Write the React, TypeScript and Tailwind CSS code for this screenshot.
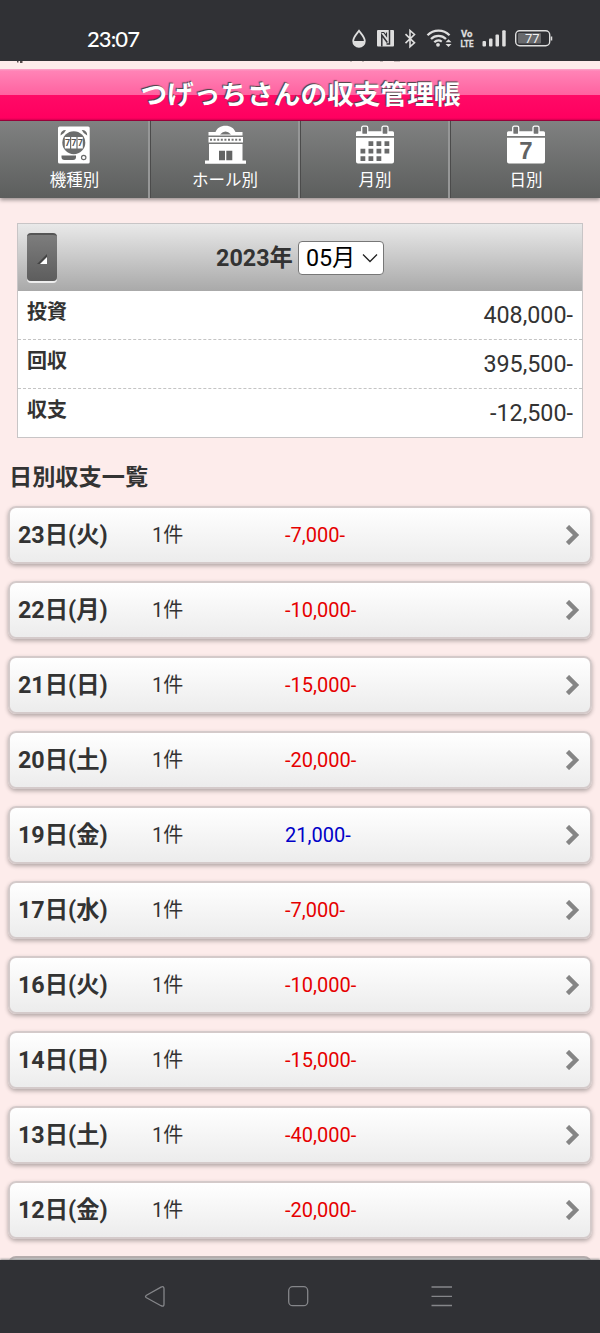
import React from "react";

const days = [
  ["23日(火)", -7000],
  ["22日(月)", -10000],
  ["21日(日)", -15000],
  ["20日(土)", -20000],
  ["19日(金)", 21000],
  ["17日(水)", -7000],
  ["16日(火)", -10000],
  ["14日(日)", -15000],
  ["13日(土)", -40000],
  ["12日(金)", -20000],
] as const;

const totals = [
  ["投資", 408000],
  ["回収", 395500],
  ["収支", -12500],
] as const;

const yen = (n: number) => `${n.toLocaleString("en-US")}-`;

function StatusIcons() {
  return (
    <svg width="204" height="24" viewBox="350 26 204 24" fill="none" stroke="#dedede">
      <path d="M359 30.8c-2.4 3.200-5.800 6.600-5.800 10.200a5.800 5.800 0 0 0 11.600 0c0-3.600-3.400-7-5.800-10.200z" strokeWidth="1.800" />
      <path d="M353.500 41h11a5.500 5.500 0 0 1-11 0z" fill="#dedede" stroke="none" />
      <rect x="377" y="30" width="17" height="16.500" rx="1" fill="#dedede" stroke="none" />
      <path d="M381.800 46.500V35l5.500 7.500M389.500 30v14h-3" stroke="#303135" strokeWidth="1.500" fill="none" />
      <path d="M381.300 32.500h2.500l2.700 3.500V32.500" stroke="#303135" strokeWidth="1.200" fill="none" />
      <path d="M405.500 34.200l9 8.600-4.500 3.900V30.500l4.500 4-9 8.600" strokeWidth="1.600" />
      <g strokeWidth="2.300">
        <path d="M427.500 35.300a15.500 15.500 0 0 1 22 0" />
        <path d="M431 39a10.600 10.600 0 0 1 15 0" />
        <path d="M434.300 42.300a6 6 0 0 1 7.500-.7" />
      </g>
      <circle cx="438" cy="44.800" r="1.900" fill="#dedede" stroke="none" />
      <path d="M445.500 42.300h6l-3-3zM445.500 43.900h6l-3 3z" fill="#dedede" stroke="none" />
      <g fill="#dedede" stroke="#dedede" strokeWidth="0.300" fontFamily="Roboto" fontWeight="700" fontSize="9">
        <text x="461" y="36.800" textLength="11.500" lengthAdjust="spacingAndGlyphs">Vo</text>
        <text x="460.500" y="46.500" textLength="13" lengthAdjust="spacingAndGlyphs">LTE</text>
      </g>
      <g fill="#dedede" stroke="none">
        <rect x="482.500" y="41" width="3.500" height="5.500" rx="1" />
        <rect x="489" y="38.500" width="3.500" height="8" rx="1" />
        <rect x="495.500" y="34.500" width="3.500" height="12" rx="1" />
        <rect x="502.200" y="30.300" width="3.500" height="16.200" rx="1" />
      </g>
      <rect x="515.700" y="30.700" width="34" height="15" rx="4" strokeWidth="1.400" />
      <rect x="518" y="33" width="23" height="10.500" rx="1" fill="#68696c" stroke="none" />
      <path d="M551.500 36.500v4" strokeWidth="1.500" />
      <text x="525" y="43" fontSize="13" fill="#f2f2f2" stroke="none" fontFamily="Roboto">77</text>
    </svg>
  );
}

const machineIcon = (
  <g>
    <rect x="4" y="0.500" width="31.700" height="37" rx="1.500" />
    <circle cx="19.800" cy="16.700" r="11.500" fill="#6c6d6d" />
    <path d="M6.500 9.500Q6.500 4 12 4l-2 3zM33.200 9.500Q33.200 4 27.700 4l2 3z" fill="#6c6d6d" />
    <path d="M10.800 11h5.200v11.500h-5.200zM17.200 11h5.200v11.500h-5.200zM23.600 11h5.200v11.500h-5.200z" />
    <g fontSize="9" fontWeight="700" fontFamily="Roboto" fill="#555">
      <text x="10.900" y="20">7</text>
      <text x="17.300" y="20">7</text>
      <text x="23.700" y="20">7</text>
    </g>
    <path d="M7.500 29.500h14.500v1.500q0 3-3 3h-8.500q-3 0-3-3z" fill="#666767" />
    <circle cx="29.700" cy="31.500" r="2.200" fill="#fff" stroke="#696a6a" strokeWidth="1.200" />
  </g>
);

const hallIcon = (
  <g>
    <path d="M3.500 9.500V6h7C12 2 15.500-.3 20.500-.3S29 2 30.500 6h7v3.500z" />
    <path d="M15 8.500q5.500-6 11 0z" fill="#747575" />
    <rect x="3.500" y="11" width="34.500" height="5.500" />
    <path d="M5 13.700h31" stroke="#747575" strokeWidth="2" strokeDasharray="2 1.600" />
    <path d="M4 18h33.500V34.500H41V37.800H0V34.500h4z" />
    <path d="M14 24.800h6v9.500h-6zM21.300 24.800h6v9.500h-6z" fill="#636464" />
  </g>
);

const calendarBase = (
  <g>
    <path d="M2.500 5.300H37.500q1.500 0 1.500 1.500V10H1V6.800Q1 5.300 2.500 5.300zM1 11.700h38V35.500q0 2-2 2H3q-2 0-2-2z" />
    <rect x="6.700" y=".2" width="6" height="8.300" rx="1.500" fill="#737474" stroke="#fff" strokeWidth="1.300" />
    <rect x="27" y=".2" width="6" height="8.300" rx="1.500" fill="#737474" stroke="#fff" strokeWidth="1.300" />
  </g>
);

const monthIcon = (
  <g>
    {calendarBase}
    <path d="M13.500 15.200h4.800v4.800h-4.800zM21.500 15.200h4.800v4.800h-4.800zM29.500 15.200h4.800v4.800h-4.800zM5.500 22.700h4.800v4.800H5.500zM13.500 22.700h4.800v4.800h-4.800zM21.500 22.700h4.800v4.800h-4.800zM29.500 22.700h4.800v4.800h-4.800zM5.500 30.200h4.800v4.800H5.500zM13.500 30.200h4.800v4.800h-4.800zM21.500 30.200h4.800v4.800h-4.800z" fill="#696a6a" />
  </g>
);

const dayIcon = (
  <g>
    {calendarBase}
    <text x="20" y="32.500" textAnchor="middle" fontSize="24" fontWeight="700" fontFamily="Liberation Sans" fill="#626363">7</text>
  </g>
);

const tabs = [
  ["機種別", machineIcon],
  ["ホール別", hallIcon],
  ["月別", monthIcon],
  ["日別", dayIcon],
] as const;

export default function App() {
  return (
    <div className="flex h-[1333px] w-[600px] flex-col overflow-hidden bg-[#fdeceb] font-[Roboto,'Noto_Sans_CJK_JP',sans-serif] text-[#333]">
      <div className="flex h-[61px] shrink-0 items-start justify-between bg-[#303135] pl-[87px] pr-[46px]">
        <div className="pt-[26px] font-[Lato,sans-serif] text-[22px] font-medium leading-[25px] tracking-[-0.9px] text-white">23:07</div>
        <div className="pt-[26px]"><StatusIcons /></div>
      </div>
      <div className="h-2 shrink-0">
        <svg width="600" height="8" fill="#554a4a">
          <path d="M17 0h1.500v1.500H17zM20 0h2.500v2H20z" />
          <path d="M350 0h2v.6h-2zM362 0h2v.6h-2zM380 0h3v.6h-3zM394 0h6v.6h-6z" opacity=".6" />
        </svg>
      </div>
      <header className="flex h-[52px] shrink-0 items-center justify-center border-b border-[#a0003c] bg-[linear-gradient(to_bottom,#f9a9cd_0px,#ff83b6_2px,#ff62a0_26px,#ff0a66_26px,#ff0060_49px,#d80052_51px)] pl-px text-[26.7px] font-bold leading-[50px] text-white [text-shadow:-1px_-1px_1px_#444]">
        <h1>つげっちさんの収支管理帳</h1>
      </header>
      <nav className="z-10 grid h-[77px] shrink-0 grid-cols-4 bg-[linear-gradient(#808181,#5c5e5d)] shadow-[0_2px_4px_rgba(0,0,0,0.4)]">
        {tabs.map(([label, icon], i) => (
          <div key={label} className={`flex flex-col items-center pl-px pt-1 text-white ${i ? "border-l border-l-[#4b4b4b]" : ""} ${i < 3 ? "border-r-2 border-r-[#969797]" : ""}`}>
            <svg width="41" height="40" viewBox="0 -1 41 40" fill="#fff" className="overflow-visible">{icon}</svg>
            <span className="pt-px text-[16.5px] leading-[30px]">{label}</span>
          </div>
        ))}
      </nav>
      <main className="min-h-0 flex-1 overflow-hidden">
        <section className="mx-[17px] mt-[25px] h-[215px] border-[1px] border-[#c8c5c6] bg-white pb-px">
          <div className="grid h-[67px] grid-cols-[1fr_auto_1fr] items-center bg-[linear-gradient(#e9e9e9,#a9a9a9)]">
            <button className="-mt-px ml-[9px] flex h-[48px] w-[30px] items-center justify-center rounded-[4px] border-t-2 border-[#555] bg-[linear-gradient(#7d7d7d,#5d5d5d)] shadow-[0_2px_0_#eee]">
              <svg width="12" height="12" className="mt-[3px]"><path d="M11 0v10H1z" fill="#444" /><path d="M11 3v7H4z" fill="#fff" /></svg>
            </button>
            <div className="flex items-center gap-[5px] text-[23.300px] leading-[32px]">
              <b>2023年</b>
              <div className="flex h-[34px] w-[86px] items-center justify-between rounded-[4px] border-[1.5px] border-[#777] bg-white pl-[7px] pr-[5px] text-black">
                <span>05月</span>
                <svg width="16" height="10" fill="none" stroke="#222" strokeWidth="1.300"><path d="M1 1.500 8 8.500l7-7" /></svg>
              </div>
            </div>
          </div>
          {totals.map(([label, amount], i) => (
            <div key={label} className={`flex h-[49px] justify-between px-[9px] ${i < 2 ? "border-b-[1.5px] border-dashed border-[#c4c4c4]" : ""}`}>
              <b className="text-[20px] leading-[42px]">{label}</b>
              <span className="text-[23.3px] leading-[48px]">{yen(amount)}</span>
            </div>
          ))}
        </section>
        <h2 className="mb-[13px] ml-[9px] mt-[23px] text-[23.2px] font-bold leading-[32px]">日別収支一覧</h2>
        <div className="flex flex-col gap-[17px] px-2">
          {days.map(([day, amount]) => (
            <div key={day} className="flex h-[58px] shrink-0 items-center rounded-[8px] border-2 border-[#d4caca] bg-[linear-gradient(#fff,#ececec)] pl-2 pr-[10px] shadow-[0_2px_4px_rgba(0,0,0,0.3)]">
              <b className="w-[134px] text-[23.300px] leading-[54px]">{day}</b>
              <span className="w-[133px] text-[20px] leading-[54px]">1件</span>
              <span className={`flex-1 text-[20px] leading-[54px] ${amount < 0 ? "text-[#e60000]" : "text-[#0000c8]"}`}>{yen(amount)}</span>
              <svg width="14" height="20" fill="none" stroke="#858585" strokeWidth="4.500"><path d="m1.500 1.500 8.500 8.500-8.500 8.500" /></svg>
            </div>
          ))}
          <div className="h-[58px] shrink-0 rounded-[8px] border-2 border-[#b5adad] bg-[#ccc]" />
        </div>
      </main>
      <footer className="z-10 h-[73px] shrink-0 bg-[#303135] shadow-[0_-1px_2px_#999]">
        <svg width="600" height="73" fill="none" stroke="#85868a" strokeWidth="1.300">
          <path d="M146.500 35.200 161 27.200q3-1.500 3 1.500v15.500q0 3-3 1.500l-14.500-8q-2-1.200 0-2.500z" />
          <rect x="288.700" y="26.700" width="19" height="19" rx="4" />
          <path d="M431.500 27h20.500M431.500 36.300h20.500M431.500 45.500h20.500" />
        </svg>
      </footer>
    </div>
  );
}
